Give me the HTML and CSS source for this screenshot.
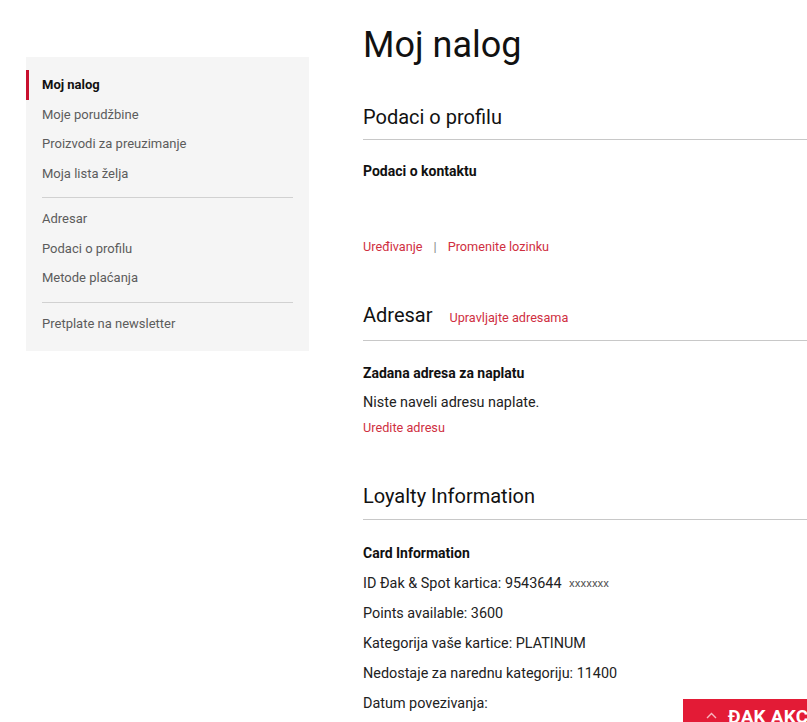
FILE: index.html
```html
<!DOCTYPE html>
<html lang="sr">
<head>
<meta charset="utf-8">
<title>Moj nalog</title>
<link rel="stylesheet" href="styles.css">
</head>
<body>
<div class="page">
  <aside class="sidebar">
    <ul class="nav">
      <li class="nav-item active">Moj nalog</li>
      <li class="nav-item">Moje porudžbine</li>
      <li class="nav-item">Proizvodi za preuzimanje</li>
      <li class="nav-item">Moja lista želja</li>
      <li class="nav-divider"></li>
      <li class="nav-item">Adresar</li>
      <li class="nav-item">Podaci o profilu</li>
      <li class="nav-item">Metode plaćanja</li>
      <li class="nav-divider"></li>
      <li class="nav-item">Pretplate na newsletter</li>
    </ul>
  </aside>
  <main class="main">
    <h1 class="page-title">Moj nalog</h1>

    <section class="block">
      <div class="block-title first">Podaci o profilu</div>
      <div class="box-title">Podaci o kontaktu</div>
      <div class="box-content"></div>
      <div class="actions">
        <a class="link">Uređivanje</a><span class="sep">|</span><a class="link">Promenite lozinku</a>
      </div>
    </section>

    <section class="block">
      <div class="block-title">Adresar <a class="link title-link">Upravljajte adresama</a></div>
      <div class="box-title">Zadana adresa za naplatu</div>
      <p class="text">Niste naveli adresu naplate.</p>
      <div class="actions tight"><a class="link">Uredite adresu</a></div>
    </section>

    <section class="block loyalty">
      <div class="block-title">Loyalty Information</div>
      <div class="box-title">Card Information</div>
      <p class="text">ID Đak &amp; Spot kartica: 9543644 <span class="masked">xxxxxxx</span></p>
      <p class="text">Points available: 3600</p>
      <p class="text">Kategorija vaše kartice: PLATINUM</p>
      <p class="text">Nedostaje za narednu kategoriju: 11400</p>
      <p class="text">Datum povezivanja:</p>
    </section>
  </main>
</div>
<div class="promo-tab">
  <svg class="chev" width="11" height="7" viewBox="0 0 11 7"><polyline points="1,6 5.5,1.5 10,6" fill="none" stroke="#f6b8bf" stroke-width="1.4"/></svg>
  <span class="promo-text">ĐAK AKCIJE</span>
</div>
</body>
</html>
```

FILE: styles.css
```css
html, body {
  margin: 0;
  padding: 0;
  background: #fff;
}
body {
  font-family: Roboto, "Liberation Sans", Arial, sans-serif;
  color: #222;
  overflow: hidden;
}
.page {
  display: flex;
  gap: 54px;
  padding-left: 26px;
  padding-top: 24px;
}
.sidebar {
  width: 283px;
  flex: 0 0 283px;
  margin-top: 33px;
  background: #f5f5f5;
  align-self: flex-start;
}
.nav {
  list-style: none;
  margin: 0;
  padding: 13px 0;
}
.nav-item {
  height: 29.5px;
  line-height: 29px;
  padding-left: 13px;
  font-size: 13px;
  color: #5c5c5c;
  border-left: 3px solid transparent;
  box-sizing: border-box;
}
.nav-item.active {
  border-left-color: #c8102e;
  color: #111;
  font-weight: 700;
}
.nav-divider {
  height: 1px;
  background: #d1d1d1;
  margin: 9px 16px 6px 16px;
}
.main {
  flex: 1;
  min-width: 0;
}
.page-title {
  margin: 0 0 38px 0;
  font-size: 36px;
  line-height: 43px;
  font-weight: 400;
  color: #111;
}
.block {
  margin-bottom: 46px;
}
.block-title {
  font-size: 20px;
  line-height: 24px;
  color: #111;
  padding-bottom: 10px;
  border-bottom: 1px solid #c8c8c8;
  margin-bottom: 22px;
}
.block-title.first {
  margin-top: -1px;
  padding-top: 1px;
  margin-bottom: 21px;
}
.title-link {
  font-size: 12.7px;
  margin-left: 12px;
}
.box-title {
  font-size: 14px;
  line-height: 20px;
  font-weight: 700;
  color: #111;
}
.box-content {
  height: 56px;
}
.actions {
  font-size: 12.7px;
  line-height: 20px;
}
.actions.tight {
  margin-top: 5px;
}
.link {
  color: #cf2f3f;
  text-decoration: none;
}
.sep {
  color: #888;
  margin: 0 11px;
}
.text {
  margin: 10px 0 0 0;
  font-size: 14.4px;
  line-height: 20px;
  color: #222;
}
.loyalty .block-title {
  margin-top: 2px;
  padding-bottom: 11px;
  margin-bottom: 23px;
}
.masked {
  font-size: 11.5px;
  color: #555;
  margin-left: 4px;
  vertical-align: 1px;
}
.promo-tab {
  position: fixed;
  left: 683px;
  top: 699px;
  width: 220px;
  height: 40px;
  background: #e31b36;
  display: flex;
  align-items: flex-start;
  padding-left: 23px;
  padding-top: 7px;
  box-sizing: border-box;
  color: #fff;
}
.chev {
  margin-top: 6px;
  margin-right: 11px;
}
.promo-text {
  font-size: 19px;
  line-height: 22px;
  font-weight: 700;
  letter-spacing: 0.2px;
}
```
